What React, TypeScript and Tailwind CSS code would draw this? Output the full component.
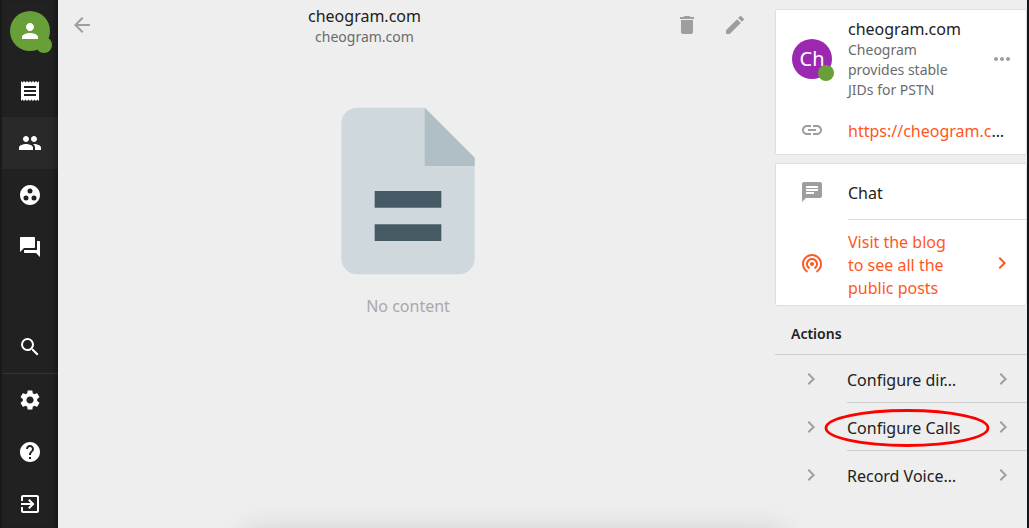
import type { ReactNode } from "react";
import type { IconType } from "react-icons";
import {
  MdArrowBack,
  MdChat,
  MdChevronRight,
  MdDelete,
  MdEdit,
  MdExitToApp,
  MdForum,
  MdGroupWork,
  MdHelp,
  MdLink,
  MdMoreHoriz,
  MdPeople,
  MdPerson,
  MdReceipt,
  MdSearch,
  MdSettings,
  MdWifiTethering,
} from "react-icons/md";

function NavItem({ icon: Icon, label, active = false }: { icon: IconType; label: string; active?: boolean }) {
  return (
    <a
      href="#"
      aria-label={label}
      aria-current={active ? "page" : undefined}
      className={`flex h-[52px] shrink-0 items-center justify-center ${active ? "bg-white/4" : ""}`}
    >
      <Icon className="size-6" />
    </a>
  );
}

function Sidebar() {
  return (
    <nav className="flex w-[58px] shrink-0 flex-col overflow-hidden border-l-2 border-[#191919] bg-[#212121] text-white shadow-[inset_-6px_0_6px_-4px_rgba(0,0,0,0.4)]">
      <a href="#" aria-label="Profile" className="relative mx-auto mt-[11px] mb-3.5 flex size-10 items-center justify-center rounded-full bg-[#689f38]">
        <MdPerson className="size-6" />
        <span className="absolute -right-0.5 -bottom-0.5 size-4 rounded-full bg-[#689f38]" />
      </a>
      <NavItem icon={MdReceipt} label="News" />
      <NavItem icon={MdPeople} label="Contacts" active />
      <NavItem icon={MdGroupWork} label="Communities" />
      <NavItem icon={MdForum} label="Chats" />
      <div className="mt-auto -mb-0.5 flex flex-col">
        <NavItem icon={MdSearch} label="Search" />
        <div className="border-t border-white/8">
          <NavItem icon={MdSettings} label="Configuration" />
          <NavItem icon={MdHelp} label="Help" />
          <NavItem icon={MdExitToApp} label="Logout" />
        </div>
      </div>
    </nav>
  );
}

function HeaderButton({ icon: Icon, label }: { icon: IconType; label: string }) {
  return (
    <button type="button" aria-label={label} className="flex size-12 shrink-0 items-center justify-center text-[#9e9e9e]">
      <Icon className="size-6" />
    </button>
  );
}

function EmptyDocument() {
  return (
    <svg viewBox="0 0 24 24" className="size-[200px]" aria-hidden="true">
      <path d="M5.900 2H14l6 6v12.100a1.900 1.900 0 0 1-1.900 1.900H5.900A1.900 1.900 0 0 1 4 20.100V3.900A1.900 1.900 0 0 1 5.900 2z" fill="#cfd8dc" />
      <path d="M14 2l6 6v1h-6z" fill="#b0bec5" />
      <path d="M8 12h8v2H8zM8 16h8v2H8z" fill="#455a64" />
    </svg>
  );
}

function Content() {
  return (
    <main className="flex min-w-0 flex-1 flex-col pr-[17px]">
      <header className="flex h-[50px] items-center">
        <HeaderButton icon={MdArrowBack} label="Back" />
        <div className="min-w-0 flex-1 pt-0.5 pr-10 text-center">
          <h1 className="text-base leading-[22px]">cheogram.com</h1>
          <p className="text-sm leading-5 text-[#6b6b6b]">cheogram.com</p>
        </div>
        <div className="-mr-px flex">
          <HeaderButton icon={MdDelete} label="Delete" />
          <HeaderButton icon={MdEdit} label="Edit" />
        </div>
      </header>
      <div className="flex flex-col items-center pt-[41px]">
        <EmptyDocument />
        <p className="mt-[3px] text-base leading-6 text-[#a9a9a9]">No content</p>
      </div>
    </main>
  );
}

function Leading({ children }: { children: ReactNode }) {
  return <span className="flex w-[72px] shrink-0 items-center justify-center text-[#9e9e9e]">{children}</span>;
}

function Trailing({ children }: { children: ReactNode }) {
  return <span className="flex w-16 shrink-0 items-center justify-center pl-4 text-[#9e9e9e]">{children}</span>;
}

function ActionRow({ label, divider = true, circled = false }: { label: string; divider?: boolean; circled?: boolean }) {
  return (
    <li>
      <button type="button" className="relative flex h-12 w-full items-stretch text-left">
        <Leading>
          <MdChevronRight className="size-6" />
        </Leading>
        <span className={`flex min-w-0 flex-1 items-center ${divider ? "border-b border-[#cfcfcf]" : ""}`}>
          <span className="min-w-0 flex-1 truncate pt-0.5 text-base leading-6">{label}</span>
          <Trailing>
            <MdChevronRight className="size-6" />
          </Trailing>
        </span>
        {circled && (
          <svg viewBox="0 0 166 40" className="absolute top-[5px] left-[49px] h-10 w-[166px]" aria-hidden="true">
            <ellipse cx="83" cy="20" rx="81" ry="17.500" fill="none" stroke="#ff0000" strokeWidth="2.800" />
          </svg>
        )}
      </button>
    </li>
  );
}

function ContactPanel() {
  return (
    <aside className="flex w-[252px] shrink-0 flex-col pt-[9px]">
      <section className="mb-2 rounded-xs border border-[#dedede] bg-white">
        <div className="flex pt-2 pb-1.5">
          <Leading>
            <span className="relative flex size-10 items-center justify-center rounded-full bg-[#9c27b0] text-xl text-white">
              Ch
              <span className="absolute -right-0.5 -bottom-0.5 size-4 rounded-full bg-[#689f38]" />
            </span>
          </Leading>
          <div className="min-w-0 flex-1">
            <h2 className="text-base leading-[22px]">cheogram.com</h2>
            <p className="text-sm leading-5 text-[#6b6b6b]">Cheogram provides stable JIDs for PSTN</p>
          </div>
          <Trailing>
            <button type="button" aria-label="More" className="flex">
              <MdMoreHoriz className="size-6" />
            </button>
          </Trailing>
        </div>
        <div className="flex h-12 items-center pr-5">
          <Leading>
            <MdLink className="size-6" />
          </Leading>
          <p className="min-w-0 flex-1 pt-0.5 text-base leading-6 whitespace-nowrap">
            <a href="#" className="text-[#ff5722]">https://cheogram.c</a>…
          </p>
        </div>
      </section>

      <section className="rounded-xs border border-[#dedede] bg-white">
        <button type="button" className="flex h-14 w-full text-left">
          <Leading>
            <MdChat className="size-6" />
          </Leading>
          <span className="flex flex-1 items-center border-b border-[#dedede] pt-0.5 text-base">Chat</span>
        </button>
        <a href="#" className="flex h-[85px] text-[#ff5722]">
          <Leading>
            <MdWifiTethering className="size-6 text-[#ff5722]" />
          </Leading>
          <span className="min-w-0 flex-1 pt-[11px] text-base leading-[23px]">Visit the blog to see all the public posts</span>
          <Trailing>
            <MdChevronRight className="size-6 text-[#ff5722]" />
          </Trailing>
        </a>
      </section>

      <section>
        <h3 className="flex h-[49px] items-center border-b border-[#cfcfcf] px-4 pt-2 text-sm font-semibold">Actions</h3>
        <ul>
          <ActionRow label="Configure dir…" />
          <ActionRow label="Configure Calls" circled />
          <ActionRow label="Record Voice…" divider={false} />
        </ul>
      </section>
    </aside>
  );
}

export default function App() {
  return (
    <div className="relative flex h-screen overflow-hidden border-r-2 border-[#16171a] bg-[#eeeeee] font-['Noto_Sans',sans-serif] text-[#212121]">
      <Sidebar />
      <Content />
      <ContactPanel />
      <div className="absolute top-full left-1/2 h-12 w-[540px] -translate-x-1/2 shadow-[0_4px_32px_rgba(0,0,0,0.14)]" />
    </div>
  );
}
